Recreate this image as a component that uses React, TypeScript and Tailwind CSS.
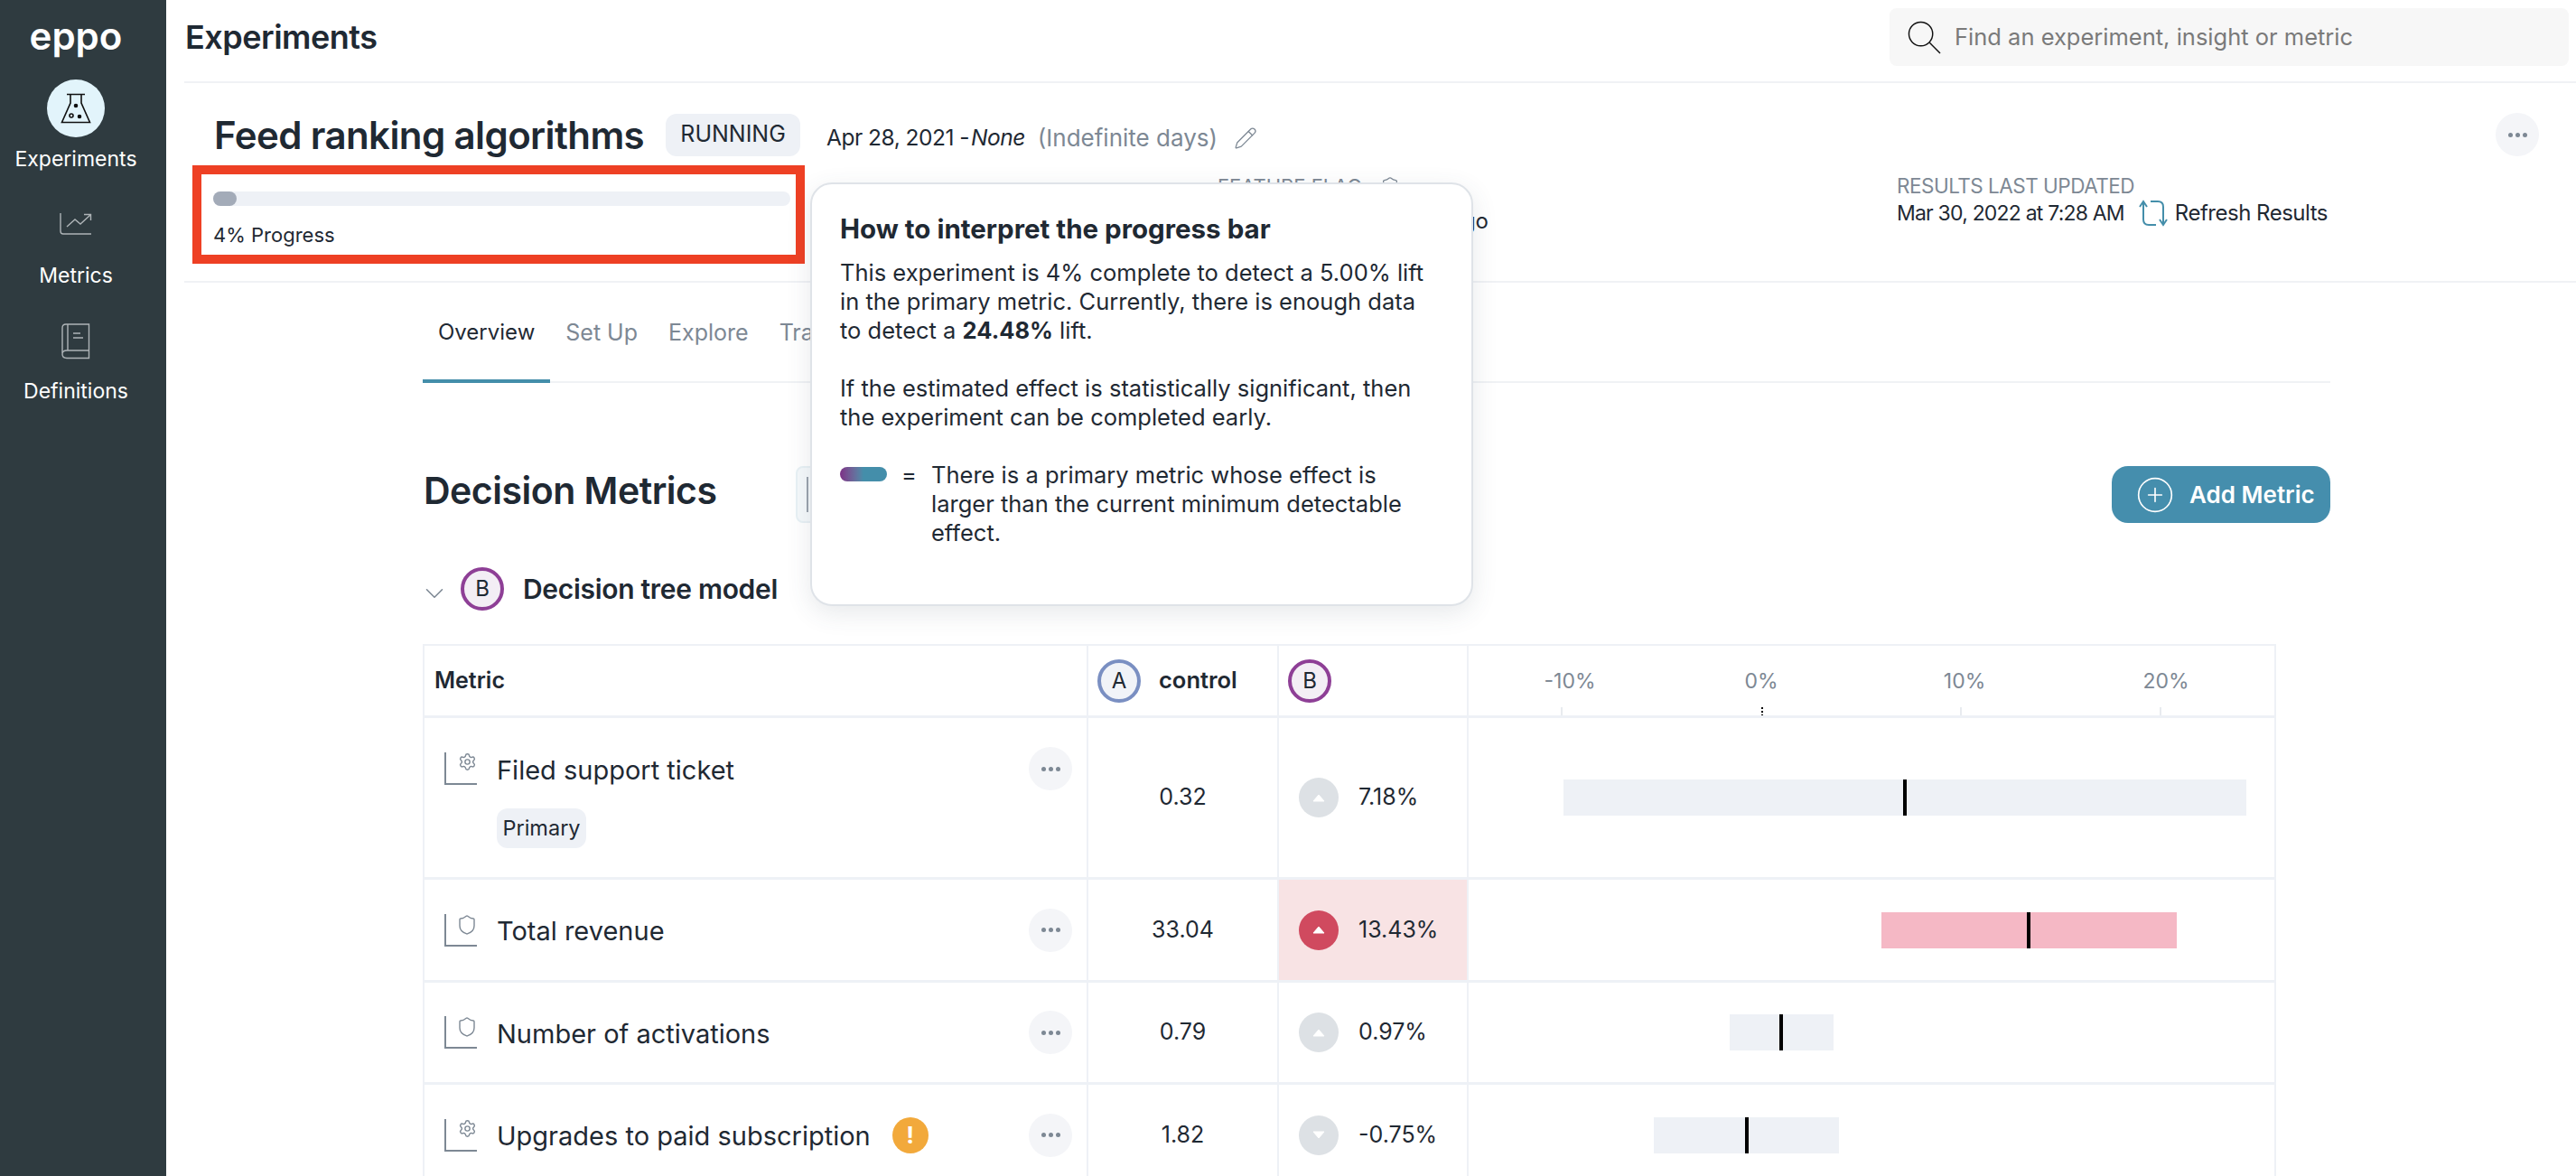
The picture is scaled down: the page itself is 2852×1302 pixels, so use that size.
import { ChevronDown, CirclePlus, Pencil, Settings, Shield } from "lucide-react";

const rows = [
  { name: "Filed support ticket", kind: "gear", primary: true, value: "0.32", delta: "7.18%", dir: "up", hot: false, bar: [105, 861], mark: 483, h: "h-[179px]" },
  { name: "Total revenue", kind: "shield", primary: false, value: "33.04", delta: "13.43%", dir: "up", hot: true, bar: [457, 784], mark: 620, h: "h-[114px]" },
  { name: "Number of activations", kind: "shield", primary: false, value: "0.79", delta: "0.97%", dir: "up", hot: false, bar: [289, 404], mark: 346, h: "h-[113px]" },
  { name: "Upgrades to paid subscription", kind: "gear", primary: false, warn: true, value: "1.82", delta: "-0.75%", dir: "down", hot: false, bar: [205, 410], mark: 308, h: "h-[114px]" },
];

const axis = [
  { label: "-10%", center: 112, tick: 102 },
  { label: "0%", center: 324, tick: 324, zero: true },
  { label: "10%", center: 549, tick: 544 },
  { label: "20%", center: 772, tick: 765 },
];

const Dots = ({ size = "w-12 h-12" }: { size?: string }) => (
  <div className={`${size} rounded-full bg-[#f4f5f8] flex items-center justify-center gap-[3px] shrink-0`}>
    <span className="w-[5px] h-[5px] rounded-full bg-[#7d8894]" />
    <span className="w-[5px] h-[5px] rounded-full bg-[#7d8894]" />
    <span className="w-[5px] h-[5px] rounded-full bg-[#7d8894]" />
  </div>
);

const Variant = ({ letter, ring }: { letter: string; ring: string }) => (
  <div className={`w-12 h-12 rounded-full border-4 ${ring} flex items-center justify-center text-[24px] text-[#1f2933] shrink-0`}>
    {letter}
  </div>
);

const MetricIcon = ({ kind }: { kind: string }) => (
  <div className="relative w-[36px] h-[36px] border-l-2 border-b-2 border-[#7d8894] shrink-0">
    {kind === "gear" ? (
      <Settings className="absolute right-0 top-0 w-[21px] h-[21px] text-[#7d8894]" strokeWidth={1.6} />
    ) : (
      <Shield className="absolute right-[-1px] top-0 w-[24px] h-[24px] text-[#7d8894]" strokeWidth={1.4} />
    )}
  </div>
);

const Delta = ({ dir, hot }: { dir: string; hot: boolean }) => (
  <div className={`w-11 h-11 rounded-full flex items-center justify-center shrink-0 ${hot ? "bg-[#d04a5f]" : "bg-[#dde1e5]"}`}>
    <svg width="14" height="9" viewBox="0 0 14 9">
      <path d={dir === "up" ? "M7 1 L13 8 H1 Z" : "M7 8 L13 1 H1 Z"} fill="#fff" stroke="#fff" strokeLinejoin="round" />
    </svg>
  </div>
);

export default function App() {
  return (
    <div className="relative flex h-[1302px] overflow-hidden bg-white text-[#1f2933] [font-family:Inter,sans-serif]">
      <aside className="w-[184px] shrink-0 bg-[#2f3b40] text-white pr-[16px] flex flex-col items-center">
        <div className="mt-[10px] h-[60px] text-[42px] leading-[60px] font-semibold">eppo</div>
        <div className="mt-[18px] w-16 h-16 rounded-full bg-[#e2f4fb] flex items-center justify-center">
          <svg width="34" height="34" viewBox="0 0 34 34" fill="none" stroke="#111" strokeWidth="1.6">
            <path d="M7 1.5 H27 M11 1.5 V11 L1.5 32.5 H32.5 L23 11 V1.5" />
            <circle cx="17" cy="14" r="1.5" fill="#111" />
            <circle cx="12" cy="25" r="2" />
            <circle cx="21" cy="26" r="1.5" fill="#111" />
          </svg>
        </div>
        <div className="mt-[8px] text-[23px] leading-[32px]">Experiments</div>
        <svg className="mt-[44px]" width="36" height="24" viewBox="0 0 36 24" fill="none" stroke="#aeb4b7" strokeWidth="1.4">
          <path d="M1 0 V20 Q1 23 4 23 H35 M8 15 L17 7 L23 12 L34 2 M27 1.5 H34.5 V8" />
        </svg>
        <div className="mt-[29px] text-[23px] leading-[32px]">Metrics</div>
        <svg className="mt-[37px]" width="32" height="40" viewBox="0 0 32 40" fill="none" stroke="#aeb4b7" strokeWidth="1.4">
          <path d="M1 33 V5 Q1 1 5 1 H30.500 V38.500 H6 Q1 38.500 1 34 Q1 30 6 30 H30.500 M7 1 V30 M13 11 H21 M13 16 H24" />
        </svg>
        <div className="mt-[19px] text-[23px] leading-[32px]">Definitions</div>
      </aside>

      <main className="flex-1 min-w-0 pl-[20px]">
        <header className="h-[92px] border-b-2 border-[#f0f2f5] pl-[1px] pr-[8px] pb-[8px] flex items-center justify-between">
          <h1 className="text-[36px] font-semibold tracking-[-0.5px]">Experiments</h1>
          <div className="w-[752px] h-16 rounded-lg bg-[#f7f7f7] flex items-center pl-[20px] gap-[15px]">
            <svg width="37" height="37" viewBox="0 0 38 38" fill="none" stroke="#111" strokeWidth="1.5">
              <circle cx="15" cy="15" r="13.500" />
              <path d="M25 25 L37 37" />
            </svg>
            <span className="text-[25.500px] text-[#7a7a7a]">Find an experiment, insight or metric</span>
          </div>
        </header>

        <section className="h-[221px] border-b-2 border-[#f0f2f5] pt-[33px]">
          <div className="h-[48px] pl-[33px] pr-[41px] flex items-center">
            <h2 className="text-[42px] font-semibold tracking-[-0.6px]">Feed ranking algorithms</h2>
            <span className="ml-[24px] h-[47px] w-[149px] rounded-xl bg-[#eef1f6] flex items-center justify-center text-[25px]">RUNNING</span>
            <span className="ml-[29px] mt-[7px] text-[24.500px] tracking-[-0.5px]">
              Apr 28, 2021 -<em className="ml-[2px]">None</em>
            </span>
            <span className="ml-[14px] mt-[7px] text-[26px] text-[#7d8894]">(Indefinite days)</span>
            <Pencil className="ml-[18px] mt-[7px] w-[26px] h-[26px] text-[#7d8894]" strokeWidth={1.2} />
            <div className="ml-auto">
              <Dots />
            </div>
          </div>
          <div className="mt-[10px] flex">
            <div className="ml-[9px] w-[678px] h-[109px] border-[10px] border-[#ee4024] pl-[13px] pt-[19px]">
              <div className="w-[639px] h-4 rounded-full bg-[#eef1f6]">
                <div className="w-[26px] h-4 rounded-full bg-[#a3abb8]" />
              </div>
              <div className="mt-[18px] text-[22px] leading-[28px]">4% Progress</div>
            </div>
            <div className="ml-[457px] w-[300px] pt-[9px]">
              <div className="flex items-center gap-[20px] text-[22px] leading-[28px] text-[#7d8894]">
                FEATURE FLAG
                <Shield className="w-[22px] h-[22px]" strokeWidth={1.4} />
              </div>
              <div className="mt-[9px] text-right text-[24px] leading-[32px]">feed_ranking_algo</div>
            </div>
            <div className="ml-[452px] pt-[9px]">
              <div className="text-[22.500px] leading-[28px] text-[#7d8894] tracking-[-0.5px]">RESULTS LAST UPDATED</div>
              <div className="mt-[2px] h-[28px] flex items-center text-[24px] tracking-[-0.5px]">
                <span className="text-[23px] tracking-[-0.8px]">Mar 30, 2022 at 7:28 AM</span>
                <svg className="ml-[16px]" width="32" height="30" viewBox="0 0 32 30" fill="none" stroke="#448eaa" strokeWidth="2">
                  <path d="M1 8 L5 2 L9 8 M5 2 V22 Q5 28 11 28 H19 M31 22 L27 28 L23 22 M27 28 V8 Q27 2 21 2 H13" />
                </svg>
                <span className="ml-[8px]">Refresh Results</span>
              </div>
            </div>
          </div>
        </section>

        <div className="ml-[264px]">
          <nav className="w-[2112px] border-b-2 border-[#f0f2f5] flex text-[25px] leading-[32px] text-[#7d8894]">
            <span className="px-[17px] pt-[39px] pb-[36px] -mb-[2px] border-b-4 border-[#448eaa] text-[24px] text-[#1f2933]">Overview</span>
            <span className="px-[17px] pt-[39px] pb-[36px]">Set Up</span>
            <span className="px-[17px] pt-[39px] pb-[36px]">Explore</span>
            <span className="ml-[17px] w-[34px] overflow-hidden pt-[39px] pb-[36px]">Traffic</span>
          </nav>

          <div className="mt-[92px] h-[63px] w-[2112px] flex items-center">
            <h3 className="pl-[1px] pb-[8px] w-[413px] text-[41px] font-semibold tracking-[-0.5px]">Decision Metrics</h3>
            <div className="w-[200px] h-[63px] rounded-lg border-2 border-[#e8f1f5] bg-[#f5f9fb] pl-[10px] py-[10px]">
              <div className="w-[2px] h-full bg-[#9aa3ad]" />
            </div>
            <button className="ml-auto w-[242px] h-[63px] rounded-[18px] bg-[#458ead] text-white flex items-center pl-[26px] gap-[16px] text-[26px] font-semibold">
              <CirclePlus className="w-[44px] h-[44px]" strokeWidth={0.9} />
              Add Metric
            </button>
          </div>

          <div className="mt-[49px] h-12 flex items-center">
            <ChevronDown className="ml-[-4px] w-[34px] h-[34px] mt-[10px] text-[#7d8894]" strokeWidth={1.1} />
            <div className="ml-[12px]">
              <Variant letter="B" ring="border-[#8e3f96] bg-[#f3eef5]" />
            </div>
            <span className="ml-[21px] text-[30px] font-semibold tracking-[-0.3px]">Decision tree model</span>
          </div>

          <div className="mt-[37px] w-[2052px] border-t-2 border-x-2 border-[#eef1f6]">
            <div className="grid grid-cols-[735px_211px_210px_892px] h-[80px] border-b-[3px] border-[#eef1f6] text-[24px]">
              <div className="border-r-2 border-[#eef1f6] pl-[11px] flex items-center text-[25px] font-semibold">Metric</div>
              <div className="border-r-2 border-[#eef1f6] pl-[10px] flex items-center gap-[20px]">
                <Variant letter="A" ring="border-[#7a8fc2] bg-[#f1f3f8]" />
                <span className="text-[25.500px] font-semibold">control</span>
              </div>
              <div className="border-r-2 border-[#eef1f6] pl-[10px] flex items-center">
                <Variant letter="B" ring="border-[#8e3f96] bg-[#f3eef5]" />
              </div>
              <div className="relative text-[23px]">
                {axis.map((a) => (
                  <div key={a.label}>
                    <span className="absolute top-[22px] -translate-x-1/2 text-[#7d8894]" style={{ left: a.center }}>
                      {a.label}
                    </span>
                    <span
                      className={`absolute top-[68px] h-[9px] w-[2px] ${a.zero ? "bg-[repeating-linear-gradient(#000_0_2px,transparent_2px_4px)]" : "bg-[#e8ebef]"}`}
                      style={{ left: a.tick }}
                    />
                  </div>
                ))}
              </div>
            </div>

            {rows.map((r) => (
              <div key={r.name} className={`grid grid-cols-[735px_211px_210px_892px] ${r.h} border-b-[3px] border-[#eef1f6]`}>
                <div className="border-r-2 border-[#eef1f6] flex flex-col justify-center">
                  <div className="h-12 pl-[22px] pr-[16px] flex items-center">
                    <MetricIcon kind={r.kind} />
                    <span className="ml-[22px] mt-[3px] text-[29px]">{r.name}</span>
                    {r.warn && (
                      <span className="ml-[24px] w-10 h-10 rounded-full bg-[#f2a93b] text-white flex items-center justify-center text-[26px] font-bold">!</span>
                    )}
                    <div className="ml-auto">
                      <Dots />
                    </div>
                  </div>
                  {r.primary && (
                    <div className="ml-[80px] mt-[20px] h-[44px] w-[99px] rounded-xl bg-[#eef1f6] flex items-center justify-center text-[23.500px]">Primary</div>
                  )}
                </div>
                <div className="border-r-2 border-[#eef1f6] flex items-center justify-center text-[25px]">{r.value}</div>
                <div className={`border-r-2 border-[#eef1f6] pl-[22px] flex items-center gap-[22px] text-[25px] ${r.hot ? "bg-[#f8e3e4]" : ""}`}>
                  <Delta dir={r.dir} hot={r.hot} />
                  <span>{r.delta}</span>
                </div>
                <div className="relative flex items-center">
                  <div
                    className={`absolute h-10 ${r.hot ? "bg-[#f5b8c5]" : "bg-[#eef1f6]"}`}
                    style={{ left: r.bar[0], width: r.bar[1] - r.bar[0] }}
                  />
                  <div className="absolute h-10 w-1 bg-black" style={{ left: r.mark - 2 }} />
                </div>
              </div>
            ))}
          </div>
        </div>
      </main>

      <div className="absolute left-[897px] top-[202px] w-[734px] h-[469px] rounded-[24px] border-2 border-[#dfe3e8] bg-white pl-[31px] pr-[20px] pt-[31px] shadow-[0_8px_28px_rgba(60,75,90,0.12)] text-[25.500px] leading-[32px]">
        <h4 className="text-[29.500px] leading-[36px] font-bold">How to interpret the progress bar</h4>
        <p className="mt-[15px]">
          This experiment is 4% complete to detect a 5.00% lift
          <br />
          in the primary metric. Currently, there is enough data
          <br />
          to detect a <b className="font-bold">24.48%</b> lift.
        </p>
        <p className="mt-[32px]">
          If the estimated effect is statistically significant, then
          <br />
          the experiment can be completed early.
        </p>
        <div className="mt-[32px] flex">
          <div className="mt-[7px] w-[52px] h-4 rounded-full bg-gradient-to-r from-[#7b2f86] via-[#448eaa] to-[#448eaa] shrink-0" />
          <span className="ml-[16px] w-[33px] shrink-0">=</span>
          <span>
            There is a primary metric whose effect is
            <br />
            larger than the current minimum detectable
            <br />
            effect.
          </span>
        </div>
      </div>
    </div>
  );
}
